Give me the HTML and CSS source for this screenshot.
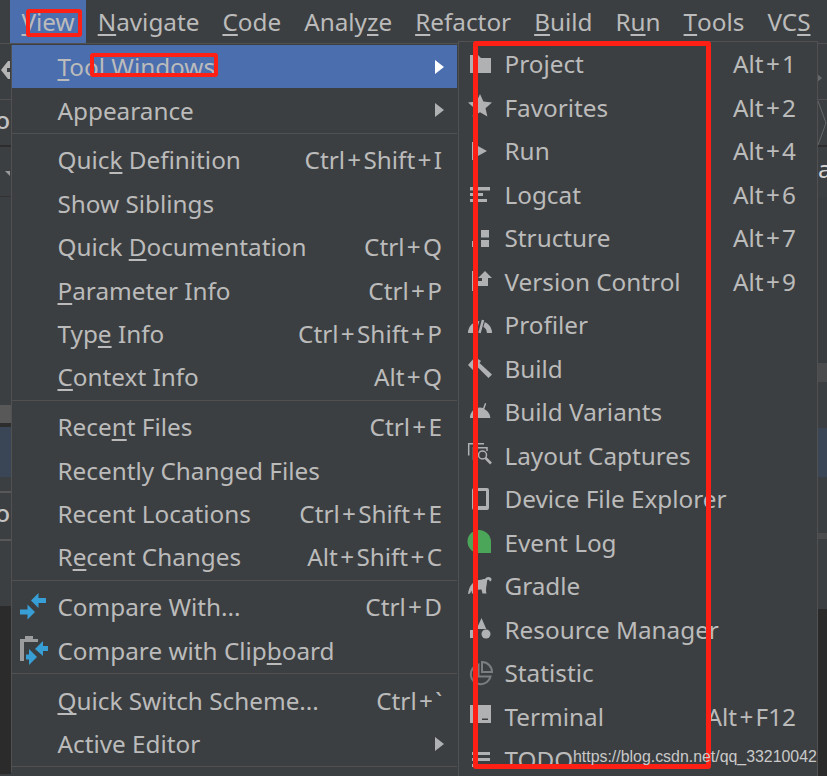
FILE: index.html
```html
<!DOCTYPE html>
<html lang="en">
<head>
<meta charset="utf-8">
<title>View menu</title>
<link rel="stylesheet" href="styles.css">
</head>
<body>
<div class="app">
  <nav class="menubar">
    <span class="top active"><u>V</u>iew</span>
    <span class="top"><u>N</u>avigate</span>
    <span class="top"><u>C</u>ode</span>
    <span class="top">Analy<u>z</u>e</span>
    <span class="top"><u>R</u>efactor</span>
    <span class="top"><u>B</u>uild</span>
    <span class="top">R<u>u</u>n</span>
    <span class="top"><u>T</u>ools</span>
    <span class="top">VC<u>S</u></span>
  </nav>
  <div class="workspace">
    <div class="strip strip-left">
      <div class="seg s-a"><svg class="back" viewBox="0 0 10 20"><path d="M8 1 1 10l7 9h2v-7H7V8h3V1z"/></svg></div>
      <div class="seg s-b"><span class="peek">o</span></div>
      <div class="seg s-c"><svg class="tri" viewBox="0 0 6 6"><path d="M0 0h6v6z"/></svg></div>
      <div class="seg s-d"></div>
      <div class="seg s-e"></div>
      <div class="seg s-f"></div>
      <div class="seg s-g"></div>
      <div class="seg s-h"></div>
      <div class="seg s-i"><span class="peek">o</span></div>
      <div class="seg s-j"></div>
      <div class="seg s-k"></div>
    </div>
    <div class="strip strip-right">
      <div class="seg r-a"><svg class="rtri" viewBox="0 0 6 8"><path d="M0 0l5 4-5 4z"/></svg></div>
      <div class="seg r-b"><svg class="chev" viewBox="0 0 9 46"><path d="M0 1l8 22-8 22" fill="none"/></svg></div>
      <div class="seg r-c"><span class="peek-a">a</span></div>
      <div class="seg r-d"></div>
      <div class="seg r-e"></div>
      <div class="seg r-f"></div>
      <div class="seg r-g"></div>
      <div class="seg r-h"></div>
      <div class="seg r-i"></div>
      <div class="seg r-j"></div>
    </div>
  </div>

  <div class="menu menu-main">
    <div class="row selected"><span class="slot"></span><span class="label"><u>T</u>ool Windows</span><span class="arrow white"></span></div>
    <div class="row"><span class="slot"></span><span class="label">Appearance</span><span class="arrow"></span></div>
    <div class="sep"></div>
    <div class="row"><span class="slot"></span><span class="label">Quic<u>k</u> Definition</span><span class="key">Ctrl<i>+</i>Shift<i>+</i>I</span></div>
    <div class="row"><span class="slot"></span><span class="label">Show Siblings</span></div>
    <div class="row"><span class="slot"></span><span class="label">Quick <u>D</u>ocumentation</span><span class="key">Ctrl<i>+</i>Q</span></div>
    <div class="row"><span class="slot"></span><span class="label"><u>P</u>arameter Info</span><span class="key">Ctrl<i>+</i>P</span></div>
    <div class="row"><span class="slot"></span><span class="label">Typ<u>e</u> Info</span><span class="key">Ctrl<i>+</i>Shift<i>+</i>P</span></div>
    <div class="row"><span class="slot"></span><span class="label"><u>C</u>ontext Info</span><span class="key">Alt<i>+</i>Q</span></div>
    <div class="sep"></div>
    <div class="row"><span class="slot"></span><span class="label">Rece<u>n</u>t Files</span><span class="key">Ctrl<i>+</i>E</span></div>
    <div class="row"><span class="slot"></span><span class="label">Recently Changed Files</span></div>
    <div class="row"><span class="slot"></span><span class="label">Recent Locations</span><span class="key">Ctrl<i>+</i>Shift<i>+</i>E</span></div>
    <div class="row"><span class="slot"></span><span class="label">R<u>e</u>cent Changes</span><span class="key">Alt<i>+</i>Shift<i>+</i>C</span></div>
    <div class="sep"></div>
    <div class="row"><span class="slot"><svg class="ico-wide" viewBox="0 0 30 30"><path class="blue" d="M13 8.500 20.500 1v5H28v5h-7.500v5z"/><path class="blue" d="M17 20 9.500 12.500v5H2v5h7.500v5z"/></svg></span><span class="label">Compare With...</span><span class="key">Ctrl<i>+</i>D</span></div>
    <div class="row"><span class="slot"><svg class="ico-wide" viewBox="0 0 30 30"><path class="clip" d="M2 4h5V1h8v3h5v3H6v19H2z"/><path class="blue" d="M17 14 25 6v5h5v5h-5v5z"/><path class="blue" d="M19 22 11 14v5.500H8v5h3V30z"/></svg></span><span class="label">Compare with Clip<u>b</u>oard</span></div>
    <div class="sep"></div>
    <div class="row"><span class="slot"></span><span class="label"><u>Q</u>uick Switch Scheme...</span><span class="key">Ctrl<i>+</i>`</span></div>
    <div class="row"><span class="slot"></span><span class="label">Active Editor</span><span class="arrow"></span></div>
    <div class="sep"></div>
  </div>

  <div class="menu menu-sub">
    <div class="row"><span class="slot"><svg class="ico" viewBox="0 0 26 26"><path d="M3 4h8l3 3h10v15H3z"/></svg></span><span class="label">Project</span><span class="key">Alt<i>+</i>1</span></div>
    <div class="row"><span class="slot"><svg class="ico" viewBox="0 0 26 26"><path d="M13 0l3.400 7.600 8.600.9-6.500 5.700 1.900 8.300-7.400-4.300-7.400 4.300 1.900-8.300L1 8.500l8.600-.9z"/></svg></span><span class="label">Favorites</span><span class="key">Alt<i>+</i>2</span></div>
    <div class="row"><span class="slot"><svg class="ico" viewBox="0 0 26 26"><path d="M5 4h1.600v18H5zM10 7.500 20 13l-10 5.500z"/></svg></span><span class="label">Run</span><span class="key">Alt<i>+</i>4</span></div>
    <div class="row"><span class="slot"><svg class="ico" viewBox="0 0 26 26"><path d="M3 6h20v3.500H3zM3 12h13v3H3zM3 18h17v3H3z"/></svg></span><span class="label">Logcat</span><span class="key">Alt<i>+</i>6</span></div>
    <div class="row"><span class="slot"><svg class="ico" viewBox="0 0 26 26"><path d="M14 5h8v7.500h-8zM14 15h8v7h-8zM5 16h6v6H5z"/></svg></span><span class="label">Structure</span><span class="key">Alt<i>+</i>7</span></div>
    <div class="row"><span class="slot"><svg class="ico" viewBox="0 0 26 26"><path d="M5 3h1.600v20H5zM18 3l7 7h-4v8H10v-5h5v-3h-4z"/></svg></span><span class="label">Version Control</span><span class="key">Alt<i>+</i>9</span></div>
    <div class="row"><span class="slot"><svg class="ico gauge" viewBox="0 0 26 26"><path class="dome" d="M3.500 21a9.500 9.500 0 0 1 19 0"/><path class="gap" d="M11.500 22 17 3"/><path class="needle" d="M12.500 21 16 8"/></svg></span><span class="label">Profiler</span></div>
    <div class="row"><span class="slot"><svg class="ico" viewBox="0 0 26 26"><path d="M1 10 8 2l6 4-1.500 2L25 19.500 21.500 23 9.500 11 6 15z"/></svg></span><span class="label">Build</span></div>
    <div class="row"><span class="slot"><svg class="ico" viewBox="0 0 26 26"><path d="M3 19c0-5 3-8 5.500-9.500L6.800 5.500 8 5l2 4c2-.7 4-.7 6 0l2-5 1.300.5-2 5.500c2.700 1.500 6 4.500 6 9z"/></svg></span><span class="label">Build Variants</span></div>
    <div class="row"><span class="slot"><svg class="ico line" viewBox="0 0 26 26"><path d="M1.700 13.500V1.700H17M6.500 18V5.700H20V9"/><circle cx="15.500" cy="13" r="4"/><path class="thick" d="M18.500 16l5.500 5.500"/></svg></span><span class="label">Layout Captures</span></div>
    <div class="row"><span class="slot"><svg class="ico" viewBox="0 0 26 26"><path fill-rule="evenodd" d="M7 2h13a2 2 0 0 1 2 2v18a2 2 0 0 1-2 2H7a2 2 0 0 1-2-2V4a2 2 0 0 1 2-2zm1 3v15h11V5z"/></svg></span><span class="label">Device File Explorer</span></div>
    <div class="row"><span class="slot"><svg class="ico" viewBox="0 0 26 26"><path class="green" d="M12 1a12 12 0 0 1 12 12v11H12a11.500 11.500 0 0 1 0-23z"/></svg></span><span class="label">Event Log</span></div>
    <div class="row"><span class="slot"><svg class="ico" viewBox="0 0 26 26"><path d="M1 21C2 13 6 8 12 7c3-.5 5-1 6-1 1-2 4-3 6-1 1 1 .5 3-1 3.500l-1-1.500c-1-.6-2 0-2 1.500 0 3-1 5-1 8 0 1 0 2 .5 4h-4l-1-4c-1 0-3 .5-5 0l-1 4H5l-.5-3-1.500 3z"/></svg></span><span class="label">Gradle</span></div>
    <div class="row"><span class="slot"><svg class="ico" viewBox="0 0 26 26"><path d="M14.500 2l4.800 11H9.700zM3 14h8v8H3z"/><circle cx="19" cy="18" r="4.500"/></svg></span><span class="label">Resource Manager</span></div>
    <div class="row"><span class="slot"><svg class="ico dim" viewBox="0 0 26 26"><path d="M11.500 4.500a10 10 0 1 0 12 12H11.500z"/><path d="M15 2a10 10 0 0 1 10 10H15z"/></svg></span><span class="label">Statistic</span></div>
    <div class="row"><span class="slot"><svg class="ico" viewBox="0 0 26 26"><path d="M3 2h21v18H3z"/><path class="cut" d="M15 15.500h6v1.500h-6zM7 8l4 3.500L7 15z"/></svg></span><span class="label">Terminal</span><span class="key">Alt<i>+</i>F12</span></div>
    <div class="row"><span class="slot"><svg class="ico" viewBox="0 0 26 26"><path d="M5 5h18v3H5zM5 11h18v3H5zM5 17h18v3H5z"/></svg></span><span class="label">TODO</span></div>
  </div>

  <div class="mark mark-view"></div>
  <div class="mark mark-tool"></div>
  <div class="mark mark-list"></div>
  <div class="watermark">https://blog.csdn.net/qq_33210042</div>
</div>
</body>
</html>
```
FILE: styles.css
```css
* { box-sizing: border-box; }
html, body { margin: 0; padding: 0; }
body { background: #3c3f41; }
.app {
  position: relative;
  width: 827px;
  height: 776px;
  overflow: hidden;
  background: #3c3f41;
  color: #bbbbbb;
  font-family: "Noto Sans", "Open Sans", sans-serif;
  font-size: 24.300px;
}
u {
  text-decoration: underline;
  text-decoration-thickness: 1.500px;
  text-underline-offset: 3px;
  text-decoration-skip-ink: none;
}

/* menu bar */
.menubar {
  display: flex;
  height: 44px;
  padding-left: 10px;
  border-bottom: 1px solid #515151;
}
.top {
  display: flex;
  align-items: center;
  height: 43px;
  padding: 0 11.500px;
  white-space: nowrap;
}
.top.active { background: #4b6eaf; }

/* window content peeking beside the menus */
.workspace {
  display: flex;
  justify-content: space-between;
  height: 732px;
}
.strip { display: flex; flex-direction: column; overflow: hidden; }
.strip-left { width: 11px; }
.strip-right { width: 9px; }
.seg { position: relative; flex: none; overflow: hidden; }
.s-a { height: 56px; border-bottom: 1px solid #515151; }
.s-b { height: 47px; border-bottom: 2px solid #2d2d2d; }
.s-c { height: 50px; border-bottom: 1px solid #323232; }
.s-d { height: 208px; }
.s-e { height: 18px; background: #585858; }
.s-f { height: 4px; background: #2d2d2d; }
.s-g { height: 50px; background: #3a4655; }
.s-h { height: 16px; border-bottom: 2px solid #585858; }
.s-i { height: 48px; border-bottom: 2px solid #585858; }
.s-j { height: 65px; }
.s-k { height: 168px; background: #2b2b2b; }
.back { display: block; width: 10px; height: 20px; margin-top: 16px; fill: #b5b5b5; }
.tri { position: absolute; left: 5px; top: 24px; width: 5px; height: 5px; fill: #9a9a9a; }
.peek {
  position: absolute;
  right: 1px;
  top: 3px;
  color: #c4c4c4;
  line-height: 34px;
  font-weight: 500;
}
.r-a { height: 56px; border-bottom: 1px solid #515151; }
.r-b { height: 47px; border-bottom: 2px solid #2d2d2d; }
.r-c { height: 50px; }
.r-d { height: 166px; background: #3a3d3f; }
.r-e { height: 19px; background: #4a4c4e; }
.r-f { height: 46px; }
.r-g { height: 49px; background: #3a4655; }
.r-h { height: 56px; }
.r-i { height: 76px; border-top: 6px solid #4a4c4e; }
.r-j { height: 167px; background: #2b2b2b; }
.rtri { position: absolute; left: 0; top: 30px; width: 5px; height: 8px; fill: #66696b; }
.chev { position: absolute; left: 0; top: 0; width: 9px; height: 46px; stroke: #66696b; }
.peek-a { position: absolute; left: 0; top: 5px; line-height: 34px; color: #d5d5d5; }

/* popups */
.menu { position: absolute; background: #3c3f41; }
.menu-main {
  left: 11px;
  top: 45px;
  width: 446px;
  border-left: 1px solid #515151;
}
.menu-sub {
  left: 458px;
  top: 41px;
  width: 360px;
  border-top: 1px solid #515151;
  border-left: 1px solid #515151;
  border-right: 1px solid #515151;
}
.row {
  display: flex;
  align-items: center;
  white-space: nowrap;
}
.menu-main .row { height: 43.400px; padding-right: 15px; }
.menu-sub .row { height: 43.500px; padding-right: 21px; }
.row.selected { background: #4b6eaf; }
.slot { position: relative; flex: none; width: 45.500px; height: 100%; }
.label { flex: 1; }
.key { flex: none; }
.key i { font-style: normal; margin: 0 2.300px; }
.sep { height: 6.500px; padding-top: 1px; }
.sep::before { content: ""; display: block; height: 1px; background: #515151; }
.arrow {
  flex: none;
  width: 0;
  height: 0;
  margin-right: -2px;
  border-left: 9px solid #afb1b3;
  border-top: 7.500px solid transparent;
  border-bottom: 7.500px solid transparent;
}
.arrow.white { border-left-color: #ffffff; }

/* icons */
.ico, .ico-wide { position: absolute; top: 50%; overflow: visible; fill: #afb1b3; }
.ico { left: 8px; width: 26px; height: 26px; margin-top: -13px; }
.ico-wide { left: 6px; width: 30px; height: 30px; margin-top: -15px; }
.ico.line { fill: none; stroke: #afb1b3; stroke-width: 1.500px; }
.ico.line .thick { stroke-width: 2.500px; }
.ico.dim { fill: none; stroke: #7b7e80; stroke-width: 2px; }
.gauge { fill: none; }
.dome { stroke: #afb1b3; stroke-width: 5px; fill: none; }
.gap { stroke: #3c3f41; stroke-width: 5.500px; fill: none; }
.needle { stroke: #afb1b3; stroke-width: 2.500px; fill: none; }
.blue { fill: #389fd6; }
.clip { fill: #9a9c9e; }
.green { fill: #4ca65a; }
.cut { fill: #3c3f41; }

/* red annotations */
.mark { position: absolute; border: 4px solid #ff2015; border-radius: 3px; }
.mark-view { left: 26px; top: 9px; width: 56px; height: 28px; }
.mark-tool { left: 90px; top: 53px; width: 128px; height: 24px; }
.mark-list { left: 473px; top: 41px; width: 238px; height: 728px; border-width: 5px; }

.watermark {
  position: absolute;
  left: 573px;
  top: 746px;
  font-family: "Liberation Sans", Arial, sans-serif;
  font-size: 15.900px;
  line-height: 22px;
  color: #c9c9c9;
  white-space: nowrap;
}
```
